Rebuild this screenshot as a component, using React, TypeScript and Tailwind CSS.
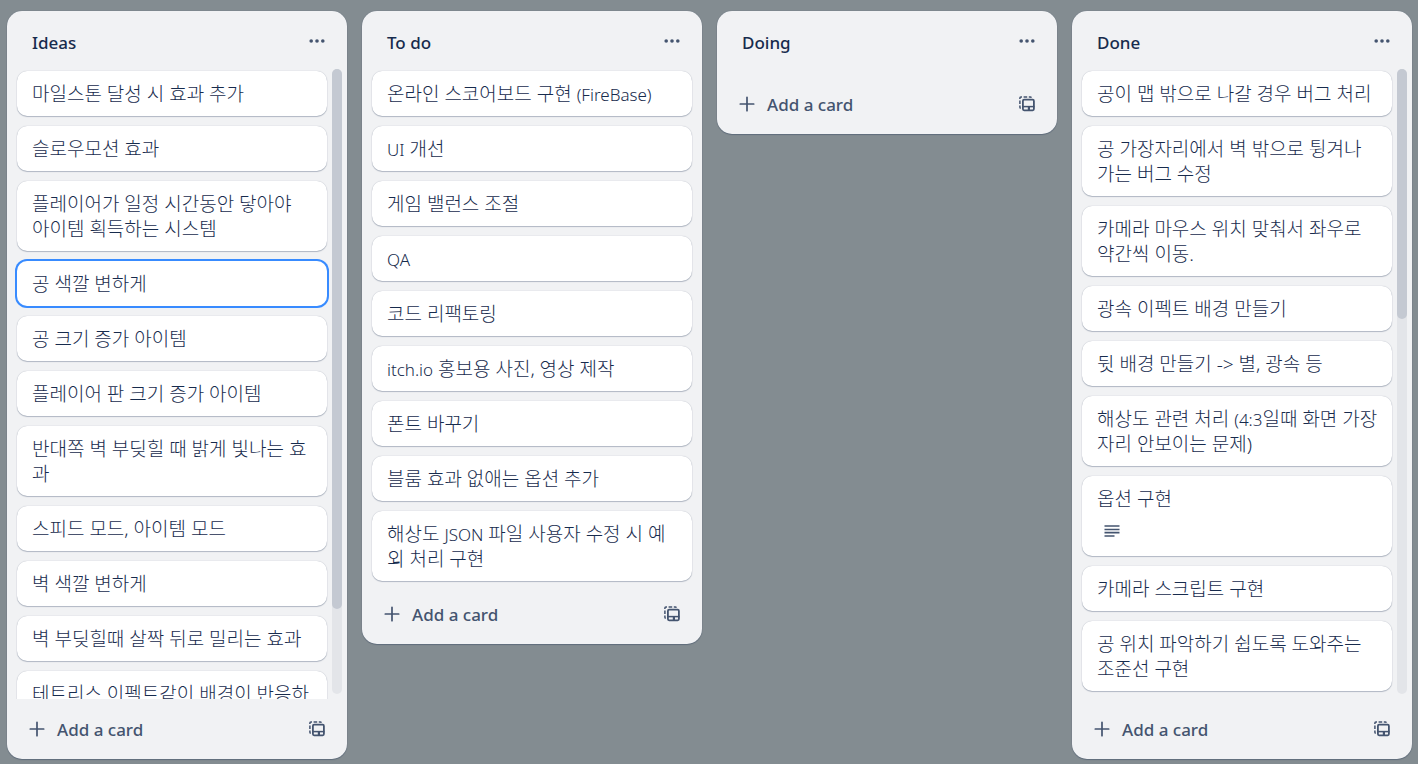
import clsx from "clsx"

type Card = {
  title: string
  focused?: boolean
  hasDescription?: boolean
}

type List = {
  name: string
  cards: Card[]
  // share of the scroll track that the thumb fills, for lists that overflow
  thumb?: number
}

const lists: List[] = [
  {
    name: "Ideas",
    thumb: 86.4,
    cards: [
      { title: "마일스톤 달성 시 효과 추가" },
      { title: "슬로우모션 효과" },
      { title: "플레이어가 일정 시간동안 닿아야\n아이템 획득하는 시스템" },
      { title: "공 색깔 변하게", focused: true },
      { title: "공 크기 증가 아이템" },
      { title: "플레이어 판 크기 증가 아이템" },
      { title: "반대쪽 벽 부딪힐 때 밝게 빛나는 효\n과" },
      { title: "스피드 모드, 아이템 모드" },
      { title: "벽 색깔 변하게" },
      { title: "벽 부딪힐때 살짝 뒤로 밀리는 효과" },
      { title: "테트리스 이펙트같이 배경이 반응하" },
    ],
  },
  {
    name: "To do",
    cards: [
      { title: "온라인 스코어보드 구현 (FireBase)" },
      { title: "UI 개선" },
      { title: "게임 밸런스 조절" },
      { title: "QA" },
      { title: "코드 리팩토링" },
      { title: "itch.io 홍보용 사진, 영상 제작" },
      { title: "폰트 바꾸기" },
      { title: "블룸 효과 없애는 옵션 추가" },
      { title: "해상도 JSON 파일 사용자 수정 시 예\n외 처리 구현" },
    ],
  },
  { name: "Doing", cards: [] },
  {
    name: "Done",
    thumb: 40,
    cards: [
      { title: "공이 맵 밖으로 나갈 경우 버그 처리" },
      { title: "공 가장자리에서 벽 밖으로 튕겨나\n가는 버그 수정" },
      { title: "카메라 마우스 위치 맞춰서 좌우로\n약간씩 이동." },
      { title: "광속 이펙트 배경 만들기" },
      { title: "뒷 배경 만들기 -> 별, 광속 등" },
      { title: "해상도 관련 처리 (4:3일때 화면 가장\n자리 안보이는 문제)" },
      { title: "옵션 구현", hasDescription: true },
      { title: "카메라 스크립트 구현" },
      { title: "공 위치 파악하기 쉽도록 도와주는\n조준선 구현" },
    ],
  },
]

function MoreIcon() {
  return (
    <svg viewBox="0 0 20 20" className="size-5" fill="currentColor" aria-hidden="true">
      <circle cx="4.2" cy="10" r="1.8" />
      <circle cx="10" cy="10" r="1.8" />
      <circle cx="15.8" cy="10" r="1.8" />
    </svg>
  )
}

function PlusIcon() {
  return (
    <svg viewBox="0 0 20 20" className="size-5" stroke="currentColor" strokeWidth="1.7" strokeLinecap="round" aria-hidden="true">
      <path d="M10 3.3v13.4M3.3 10h13.4" />
    </svg>
  )
}

function TemplateIcon() {
  return (
    <svg viewBox="0 0 20 20" className="size-5" fill="none" stroke="currentColor" aria-hidden="true">
      <path d="M2.9 5V3.9q0-1 1-1H5M6.6 2.9h3.6M11.8 2.9h1.4q.9 0 1.1.8M2.9 6.6v3.4M2.9 11.6v1.6q0 .9.9 1.1" strokeWidth="1.5" />
      <rect x="5.9" y="5.7" width="11" height="10.6" rx="1.2" strokeWidth="1.8" />
      <path d="M5.5 12.6h12" strokeWidth="1.5" />
      <path d="M11.9 12.6v3.4" strokeWidth="2.2" />
    </svg>
  )
}

function DescriptionIcon() {
  return (
    <svg viewBox="0 0 20 20" className="size-5" stroke="currentColor" strokeWidth="1.7" aria-hidden="true">
      <path d="M2.5 5h15M2.5 8.5h15M2.5 11.6h15M2.5 15h10" />
    </svg>
  )
}

// Latin letters and digits look oversized beside Hangul, so they get a smaller size
function MixedText({ text }: { text: string }) {
  return text.split(/([\x21-\x7e]*[A-Za-z0-9][\x21-\x7e]*)/).map((part, i) =>
    i % 2 ? (
      <span key={i} className="text-[17px] leading-none">
        {part}
      </span>
    ) : (
      part
    ),
  )
}

function CardItem({ card }: { card: Card }) {
  return (
    <li>
      <a
        href="#card"
        className={clsx(
          "block rounded-[10px] bg-white pt-[11px] pr-[10px] pb-[9px] pl-[15px]",
          card.focused
            ? "shadow-[0_0_0_2px_#388bff]"
            : "shadow-[0_1px_1px_#091e4240,0_0_1px_#091e424f]",
        )}
      >
        <span className="block whitespace-pre-line text-[19px] leading-[25px] font-light">
          <MixedText text={card.title} />
        </span>
        {card.hasDescription && (
          <span className="mt-[9px] mb-[6px] block pl-[5px] text-[#44546f]">
            <DescriptionIcon />
          </span>
        )}
      </a>
    </li>
  )
}

function ListColumn({ list }: { list: List }) {
  return (
    <section
      className={clsx(
        "flex max-h-full min-w-[272px] flex-1 flex-col rounded-[15px] bg-[#f1f2f4] shadow-[0_1px_1px_#091e4240,0_0_1px_#091e424f]",
        list.thumb && "h-full",
      )}
    >
      <header className="flex h-[58px] shrink-0 items-center justify-between pt-[6px] pr-5 pl-[25px]">
        <h2 className="text-[17px] leading-6 font-medium">{list.name}</h2>
        <button type="button" aria-label={`${list.name} list actions`} className="mb-1 text-[#44546f]">
          <MoreIcon />
        </button>
      </header>

      <div className="flex min-h-0 flex-auto pr-[5px]">
        <ol className="flex min-w-0 flex-1 flex-col gap-[10px] overflow-hidden pt-[2px] pr-[5px] pb-[3px] pl-[10px]">
          {list.cards.map((card) => (
            <CardItem key={card.title} card={card} />
          ))}
        </ol>
        {list.thumb && (
          <div className="mb-[5px] w-[10px] shrink-0 rounded-full bg-[#e3e5e9]">
            <div className="rounded-full bg-[#c4c9d2]" style={{ height: `${list.thumb}%` }} />
          </div>
        )}
      </div>

      <footer className="flex h-[60px] shrink-0 items-center justify-between px-5 text-[#44546f]">
        <button type="button" className="flex items-center gap-[10px] text-[17px] leading-6 font-medium">
          <PlusIcon />
          <span className="pt-[2px]">Add a card</span>
        </button>
        <button type="button" aria-label="Create from template">
          <TemplateIcon />
        </button>
      </footer>
    </section>
  )
}

export default function App() {
  return (
    <main className="flex h-screen items-start gap-[15px] overflow-hidden bg-[#838c91] pt-[11px] pr-[6px] pb-[5px] pl-[7px] font-['Noto_Sans','Noto_Sans_CJK_KR',sans-serif] text-[#172b4d]">
      {lists.map((list) => (
        <ListColumn key={list.name} list={list} />
      ))}
    </main>
  )
}
